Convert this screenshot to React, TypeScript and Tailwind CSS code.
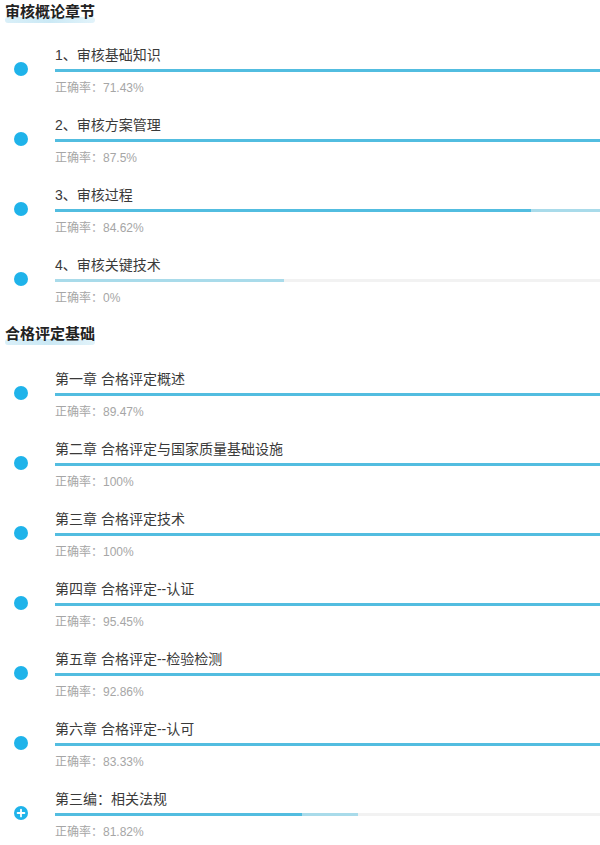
import React from 'react'

type Item = {
  title: string
  rate: string
  done: number
  buffer?: number
  plus?: boolean
}

const sections: { heading: string; items: Item[] }[] = [
  {
    heading: '审核概论章节',
    items: [
      { title: '1、审核基础知识', rate: '71.43%', done: 100 },
      { title: '2、审核方案管理', rate: '87.5%', done: 100 },
      { title: '3、审核过程', rate: '84.62%', done: 87.4, buffer: 100 },
      { title: '4、审核关键技术', rate: '0%', done: 0, buffer: 42 },
    ],
  },
  {
    heading: '合格评定基础',
    items: [
      { title: '第一章 合格评定概述', rate: '89.47%', done: 100 },
      { title: '第二章 合格评定与国家质量基础设施', rate: '100%', done: 100 },
      { title: '第三章 合格评定技术', rate: '100%', done: 100 },
      { title: '第四章 合格评定--认证', rate: '95.45%', done: 100 },
      { title: '第五章 合格评定--检验检测', rate: '92.86%', done: 100 },
      { title: '第六章 合格评定--认可', rate: '83.33%', done: 100 },
      { title: '第三编：相关法规', rate: '81.82%', done: 45.4, buffer: 55.6, plus: true },
    ],
  },
]

function Dot({ plus }: { plus?: boolean }) {
  if (plus) {
    return (
      <svg width="14" height="14" viewBox="0 0 14 14">
        <circle cx="7" cy="7" r="7" fill="#1fb3ea" />
        <path d="M7 3.6v6.8M3.6 7h6.8" stroke="#fff" strokeWidth="1.8" strokeLinecap="round" />
      </svg>
    )
  }
  return <div className="w-[14px] h-[14px] rounded-full bg-[#1fb3ea]" />
}

function Row({ item }: { item: Item }) {
  return (
    <div className="flex">
      <div className="w-[55px] shrink-0 pl-[14px] pt-[17px]">
        <Dot plus={item.plus} />
      </div>
      <div className="flex-1">
        <div className="text-[14px] leading-[20px] text-[#3a3a3a]">{item.title}</div>
        <div className="relative mt-[4px] h-[3px] bg-[#f2f2f2]">
          {item.buffer ? (
            <div className="absolute left-0 top-0 h-full bg-[#a9dbea]" style={{ width: `${item.buffer}%` }} />
          ) : null}
          <div className="absolute left-0 top-0 h-full bg-[#52bde0]" style={{ width: `${item.done}%` }} />
        </div>
        <div className="mt-[7px] text-[12px] leading-[18px] text-[#a6a6a6]">正确率：{item.rate}</div>
      </div>
    </div>
  )
}

export default function App() {
  return (
    <div
      className="w-[600px] h-[845px] overflow-hidden bg-white"
      style={{ fontFamily: '"Liberation Sans", "Noto Sans CJK SC", sans-serif' }}
    >
      {sections.map((s, i) => (
        <div key={s.heading} className={i > 0 ? 'mt-[15px]' : ''}>
          <div className={`pl-[5px] h-[24px] ${i > 0 ? 'mb-[23px]' : 'mb-[21px]'}`}>
            <span className="relative inline-block text-[15px] leading-[24px] font-bold text-[#222]">
              <span className="absolute left-0 right-0 bottom-[1px] h-[6px] rounded-sm bg-[linear-gradient(90deg,#d9eff8,#cbe9f5,#e2f3fa)]" />
              <span className="relative">{s.heading}</span>
            </span>
          </div>
          <div className="flex flex-col gap-[18px]">
            {s.items.map((it) => (
              <Row key={it.title} item={it} />
            ))}
          </div>
        </div>
      ))}
    </div>
  )
}
